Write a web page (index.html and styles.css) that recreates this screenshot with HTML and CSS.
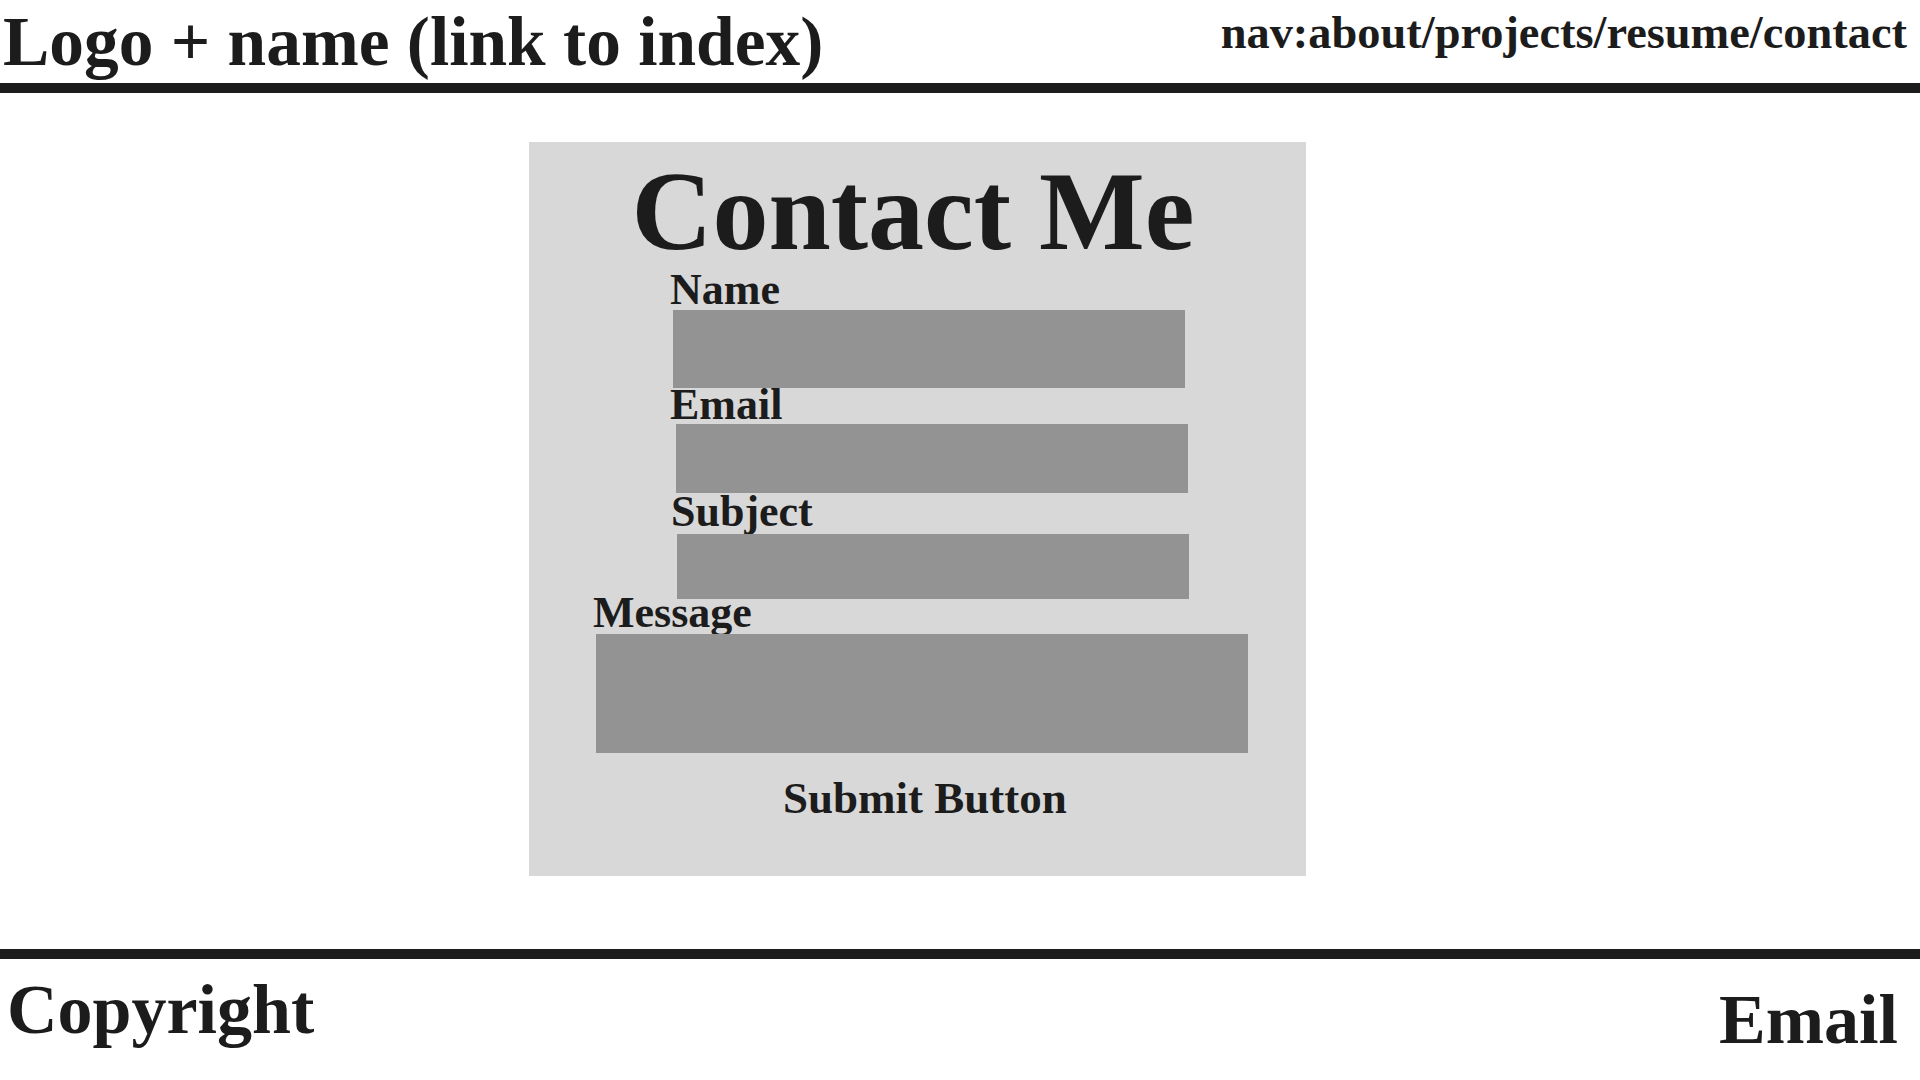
FILE: index.html
```html
<!DOCTYPE html>
<html lang="en">
<head>
<meta charset="utf-8">
<title>Contact Me</title>
<link rel="stylesheet" href="styles.css">
</head>
<body>
<header class="site-header">
  <a class="brand" href="index.html">Logo + name (link to index)</a>
  <nav class="nav">nav:about/projects/resume/contact</nav>
</header>
<main class="main">
  <form class="card">
    <h1 class="title">Contact Me</h1>
    <div class="field field-name">
      <label class="label" for="name">Name</label>
      <input class="input input-name" id="name" type="text">
    </div>
    <div class="field field-email">
      <label class="label" for="email">Email</label>
      <input class="input input-email" id="email" type="text">
    </div>
    <div class="field field-subject">
      <label class="label" for="subject">Subject</label>
      <input class="input input-subject" id="subject" type="text">
    </div>
    <div class="field field-message">
      <label class="label" for="message">Message</label>
      <textarea class="input input-message" id="message"></textarea>
    </div>
    <button class="submit" type="button">Submit Button</button>
  </form>
</main>
<footer class="site-footer">
  <span class="copyright">Copyright</span>
  <span class="footer-email">Email</span>
</footer>
</body>
</html>
```

FILE: styles.css
```css
html, body {
  margin: 0;
  padding: 0;
  background: #ffffff;
}
body {
  font-family: "Liberation Serif", "Times New Roman", serif;
  font-weight: bold;
  color: #1c1c1c;
  width: 1920px;
  height: 1080px;
  overflow: hidden;
}
.site-header {
  display: flex;
  justify-content: space-between;
  align-items: flex-start;
  height: 83px;
  padding: 0 13px 0 3px;
  border-bottom: 10px solid #1c1c1c;
}
.brand {
  font-size: 69.4px;
  line-height: normal;
  color: #1c1c1c;
  text-decoration: none;
  padding-top: 2px;
  white-space: nowrap;
}
.nav {
  font-size: 46.4px;
  line-height: normal;
  padding-top: 6px;
  white-space: nowrap;
}
.main {
  padding: 49px 0 73px 529px;
}
.card {
  box-sizing: border-box;
  width: 777px;
  height: 734px;
  background: #d8d8d8;
  padding: 13px 0 0 0;
  display: flex;
  flex-direction: column;
  margin: 0;
}
.title {
  margin: 0;
  font-size: 112px;
  line-height: 112px;
  text-align: center;
  padding-right: 9px;
  font-weight: bold;
}
.field {
  display: flex;
  flex-direction: column;
  align-items: flex-start;
}
.label {
  font-size: 44px;
  line-height: 36px;
  height: 36px;
  white-space: nowrap;
}
.input {
  display: block;
  border: none;
  outline: none;
  background: #939393;
  margin: 0;
  padding: 0;
  resize: none;
  font: inherit;
}
.field-name { margin: 5px 0 0 141px; }
.field-name .input { margin: 2px 0 0 3px; width: 512px; height: 78px; }
.field-email { margin: -1px 0 0 141px; }
.field-email .input { margin: 1px 0 0 6px; width: 512px; height: 69px; }
.field-subject { margin: 1px 0 0 142px; }
.field-subject .input { margin: 4px 0 0 6px; width: 512px; height: 65px; }
.field-message { margin: -4px 0 0 64px; }
.field-message .input { margin: 3px 0 0 3px; width: 652px; height: 119px; }
.submit {
  align-self: flex-start;
  margin: 27px 0 0 254px;
  padding: 0;
  border: none;
  background: transparent;
  font-family: inherit;
  font-weight: bold;
  font-size: 45px;
  line-height: 36px;
  color: #1c1c1c;
  white-space: nowrap;
}
.site-footer {
  display: flex;
  justify-content: space-between;
  align-items: flex-start;
  border-top: 10px solid #1c1c1c;
  padding: 0 22px 0 7px;
  font-size: 70px;
  line-height: normal;
}
.copyright {
  margin-top: 11px;
}
.footer-email {
  margin-top: 21px;
}
```
